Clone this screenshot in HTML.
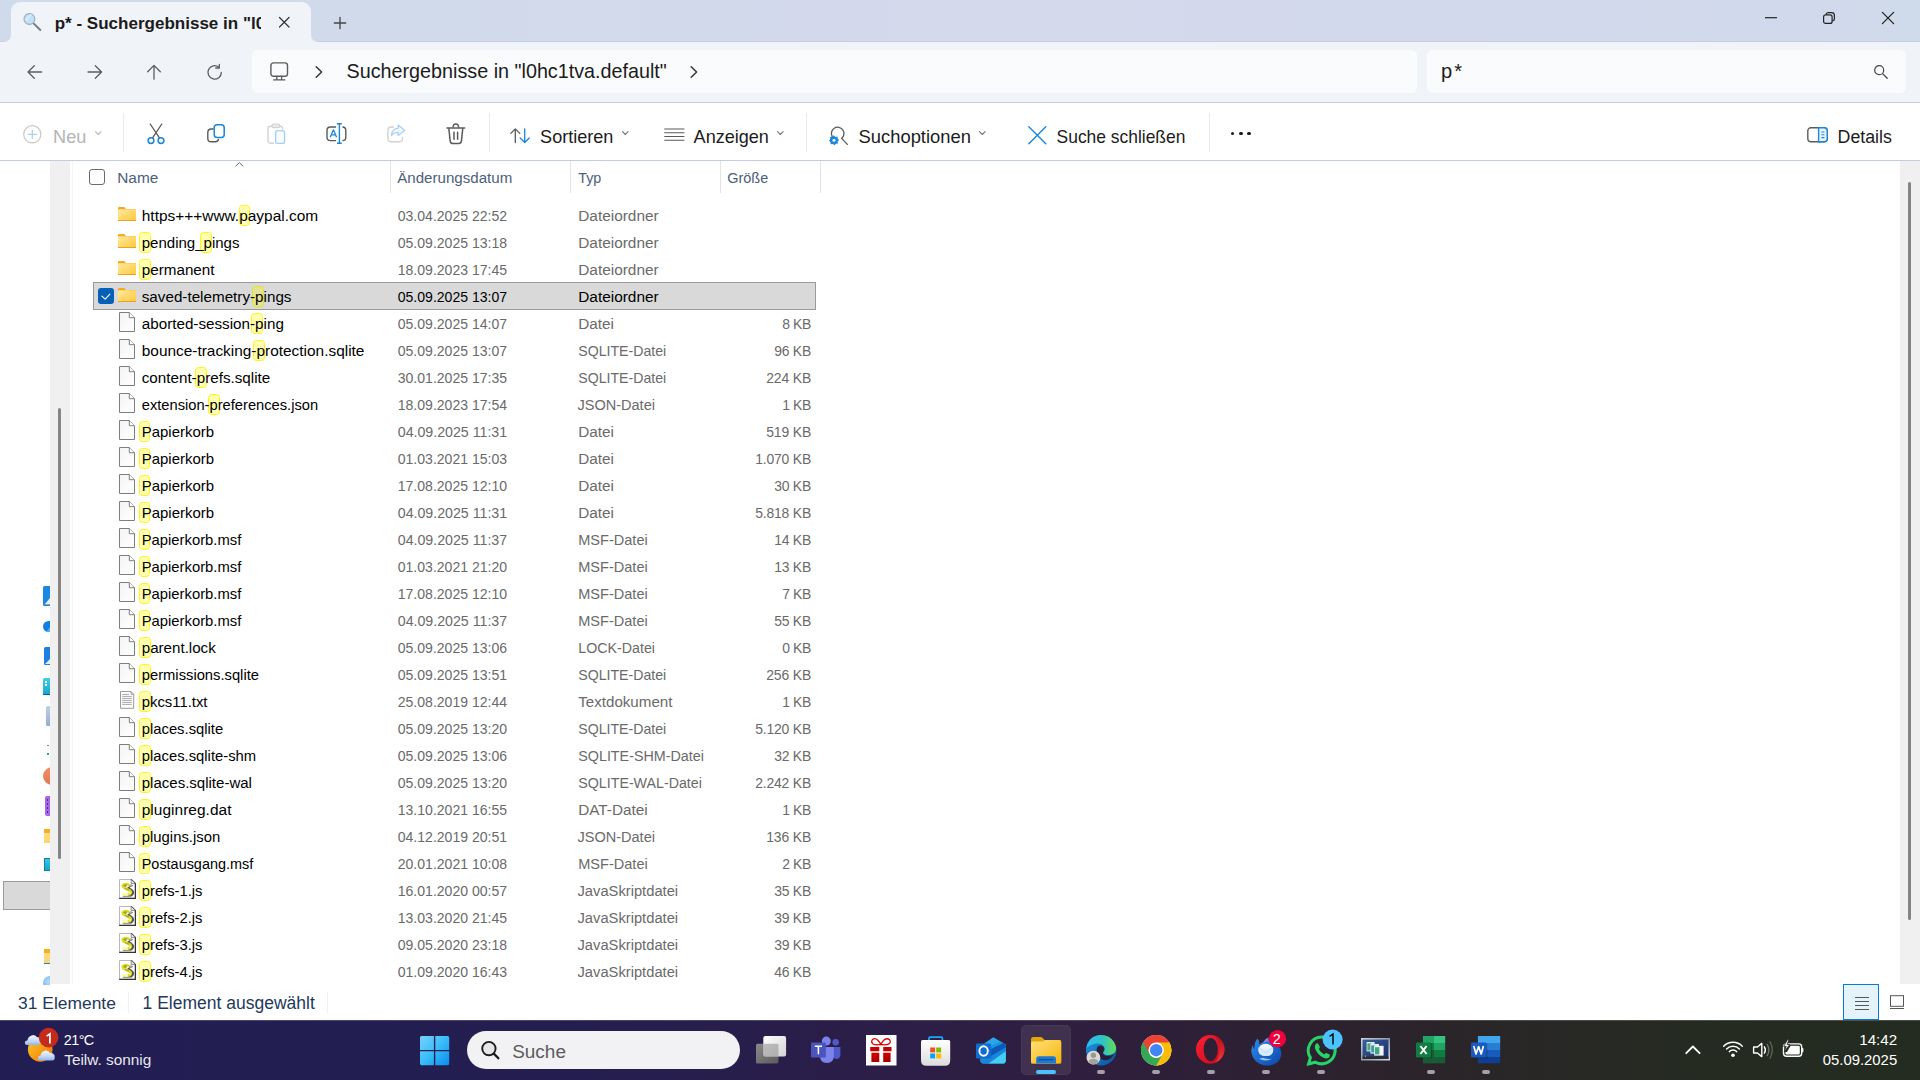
<!DOCTYPE html>
<html lang="de"><head><meta charset="utf-8"><title>p* - Suchergebnisse</title>
<style>
html,body{margin:0;padding:0;width:1920px;height:1080px;overflow:hidden;background:#fff;font-family:"Liberation Sans", sans-serif;}
.a{position:absolute}
.t{position:absolute;white-space:pre;line-height:normal}
svg{position:absolute;overflow:visible}

.hl{position:absolute;background:#ffffb0;border:1px solid #fff31a;border-radius:3.5px;box-sizing:border-box}
.sep{position:absolute;width:1px;background:#eaeaea}

</style></head><body>
<div class=a style="left:0;top:0;width:1920px;height:42px;background:linear-gradient(90deg,#cfdbeb 0%,#d1daeb 22%,#d4d9ec 50%,#d3d9ec 78%,#cfdaeb 100%)"></div><div class=a style="left:0;top:41px;width:1920px;height:1px;background:#c6cfe2"></div><div class=a style="left:11px;top:2px;width:300px;height:40px;background:#f0f3f8;border-radius:9px 9px 0 0"></div><div class=a style="left:0;top:42px;width:1920px;height:60px;background:#f0f3f8"></div><div class=a style="left:252px;top:50px;width:1165px;height:43px;background:#fafbfd;border-radius:6px"></div><div class=a style="left:1427px;top:50px;width:479px;height:43px;background:#fafbfd;border-radius:6px"></div><div class=a style="left:0;top:102px;width:1920px;height:1px;background:#c3cbdf"></div><div class=a style="left:0;top:103px;width:1920px;height:57px;background:#fff"></div><div class=a style="left:0;top:160px;width:1920px;height:1px;background:#c3cbdf"></div><div class=a style="left:50px;top:161px;width:20px;height:823px;background:#f0f0f0"></div><div class=a style="left:72px;top:161px;width:1px;height:823px;background:#f4f4f4"></div><div class=a style="left:58px;top:408px;width:3px;height:450.5px;background:#858585;border-radius:2px"></div><div class=a style="left:0;top:161px;width:50px;height:824px;overflow:hidden"><div class=a style="left:42.8px;top:425px;width:8px;height:19.6px;background:#1b87e3;border-radius:1.5px 0 0 1.5px"></div><svg style="left:44px;top:437px" width=6 height=8 viewBox="0 0 6 8"><path d="M6 0 V6.4 H.6Z" fill="#eaf3fd"/><path d="M1 7.2 H6" stroke="#3b78c8" stroke-width="1"/></svg><div class=a style="left:43px;top:460px;width:12px;height:11.4px;border-radius:50%;background:#0f7ee2"></div><svg style="left:46px;top:466px" width=4 height=6 viewBox="0 0 4 6"><path d="M4 0 V5 H0Z" fill="#58a9f0"/></svg><div class=a style="left:44px;top:486px;width:8px;height:17.7px;background:#1b80e2;border-radius:1.5px 0 0 1.5px"></div><svg style="left:45px;top:498px" width=5 height=6 viewBox="0 0 5 6"><path d="M5 0 V5 H0Z" fill="#e4effc"/></svg><div class=a style="left:43px;top:517px;width:8px;height:16px;background:linear-gradient(#3fd0e6,#1aa6d0);border-bottom:1.4px solid #0b5f9e;border-radius:1.5px 0 0 0"></div><div class=a style="left:45.4px;top:519.6px;width:2px;height:2px;background:#fff"></div><div class=a style="left:45.4px;top:523.2px;width:2px;height:2px;background:#e8fbff"></div><div class=a style="left:46.4px;top:545px;width:4px;height:19.8px;background:linear-gradient(#c3cfe6,#98acd2);border-radius:1.5px 0 0 1.5px"></div><div class=a style="left:47px;top:583.5px;width:2px;height:1.6px;background:#19b374"></div><div class=a style="left:46.6px;top:592.4px;width:2.4px;height:2px;background:#19b374"></div><div class=a style="left:43px;top:605.5px;width:19px;height:18.5px;border-radius:50%;background:linear-gradient(#f0906a,#e07850)"></div><div class=a style="left:44.8px;top:635px;width:6px;height:19.6px;background:#a765ea;border-radius:2px 0 0 2px"></div><div class=a style="left:46.6px;top:638px;width:1.6px;height:1.6px;background:#4a2a8a"></div><div class=a style="left:46.6px;top:642px;width:1.6px;height:1.6px;background:#4a2a8a"></div><div class=a style="left:46.6px;top:646px;width:1.6px;height:1.6px;background:#4a2a8a"></div><div class=a style="left:46.6px;top:650px;width:1.6px;height:1.6px;background:#4a2a8a"></div><div class=a style="left:44.2px;top:668px;width:6px;height:13.7px;background:linear-gradient(#f6b01e 0,#f6b01e 28%,#ffdc84 29%,#ffd46a 100%)"></div><div class=a style="left:44.2px;top:697px;width:6px;height:12.6px;box-sizing:border-box;background:linear-gradient(#35c8e4,#18a4cc);border:1px solid #0f7fae;border-right:0"></div><div class=a style="left:3px;top:720px;width:48px;height:29.4px;box-sizing:border-box;background:#d9d9d9;border:1px solid #9a9a9a"></div><div class=a style="left:44.2px;top:788px;width:6px;height:15.4px;background:linear-gradient(#f6b01e 0,#f6b01e 24%,#ffdc84 25%,#ffd46a 90%,#1a86dd 91%)"></div><div class=a style="left:43px;top:815px;width:14px;height:14px;border-radius:50%;background:radial-gradient(circle at 40% 40%,#b8ddfa,#4a9fe8)"></div></div><div class=a style="left:1900px;top:161px;width:20px;height:823px;background:#f0f0f0"></div><div class=a style="left:1908px;top:182px;width:3px;height:738px;background:#858585;border-radius:2px"></div><div class=sep style="left:123px;top:113px;height:39px"></div><div class=sep style="left:489px;top:113px;height:39px"></div><div class=sep style="left:806px;top:113px;height:39px"></div><div class=sep style="left:1209px;top:113px;height:39px"></div><div class=sep style="left:390px;top:161px;height:32px;background:#e3e3e3"></div><div class=sep style="left:570px;top:161px;height:32px;background:#e3e3e3"></div><div class=sep style="left:720px;top:161px;height:32px;background:#e3e3e3"></div><div class=sep style="left:820px;top:161px;height:32px;background:#e3e3e3"></div><div class=a style="left:89px;top:169px;width:16px;height:16px;box-sizing:border-box;border:1px solid #6b6b6b;border-radius:3px;background:#fff"></div><div class=a style="left:93px;top:282px;width:723px;height:28px;box-sizing:border-box;background:#d9d9d9;border:1px solid #9a9a9a"></div><div class=a style="left:98px;top:288px;width:16px;height:16px;border-radius:3px;background:#0560b6"></div><svg style="left:98px;top:288px" width=16 height=16 viewBox="0 0 16 16"><path d="M3.9 8.2 L7.2 11.2 L11.9 6.1" fill="none" stroke="#fff" stroke-width="1.1" stroke-linecap="round" stroke-linejoin="round"/></svg><svg style="left:0;top:0" width="0" height="0"><defs><linearGradient id="gfb" x1="0" y1="0" x2="1" y2="1"><stop offset="0" stop-color="#ffe9a2"/><stop offset="1" stop-color="#ffc83a"/></linearGradient><linearGradient id="gpg" x1="0" y1="0" x2="1" y2="1"><stop offset="0" stop-color="#f4f4f4"/><stop offset="1" stop-color="#ffffff"/></linearGradient></defs></svg><div class=hl style="left:238.5px;top:205.0px;width:11.5px;height:21px;background:#ffffb0;border-color:#fff31a"></div><svg style="left:118px;top:207.0px" width=18 height=14 viewBox="0 0 18 14"><path d="M0 1 Q0 0 1 0 H5.6 Q6.3 0 6.8 .6 L8 2 H17 Q18 2 18 3 V14 H0Z" fill="#f2aa1e"/><path d="M0 3.2 Q0 2.2 1 2.2 H17 Q18 2.2 18 3.2 V12.9 Q18 13.4 17.5 13.4 H.5 Q0 13.4 0 12.9Z" fill="url(#gfb)"/><path d="M0 13 H18 V13.4 Q18 14 17.4 14 H.6 Q0 14 0 13.4Z" fill="#e8a326"/></svg><div class=hl style="left:139.0px;top:232.0px;width:11.75px;height:21px;background:#ffffb0;border-color:#fff31a"></div><div class=hl style="left:200.25px;top:232.0px;width:11.75px;height:21px;background:#ffffb0;border-color:#fff31a"></div><svg style="left:118px;top:234.0px" width=18 height=14 viewBox="0 0 18 14"><path d="M0 1 Q0 0 1 0 H5.6 Q6.3 0 6.8 .6 L8 2 H17 Q18 2 18 3 V14 H0Z" fill="#f2aa1e"/><path d="M0 3.2 Q0 2.2 1 2.2 H17 Q18 2.2 18 3.2 V12.9 Q18 13.4 17.5 13.4 H.5 Q0 13.4 0 12.9Z" fill="url(#gfb)"/><path d="M0 13 H18 V13.4 Q18 14 17.4 14 H.6 Q0 14 0 13.4Z" fill="#e8a326"/></svg><div class=hl style="left:139.0px;top:259.0px;width:11.75px;height:21px;background:#ffffb0;border-color:#fff31a"></div><svg style="left:118px;top:261.0px" width=18 height=14 viewBox="0 0 18 14"><path d="M0 1 Q0 0 1 0 H5.6 Q6.3 0 6.8 .6 L8 2 H17 Q18 2 18 3 V14 H0Z" fill="#f2aa1e"/><path d="M0 3.2 Q0 2.2 1 2.2 H17 Q18 2.2 18 3.2 V12.9 Q18 13.4 17.5 13.4 H.5 Q0 13.4 0 12.9Z" fill="url(#gfb)"/><path d="M0 13 H18 V13.4 Q18 14 17.4 14 H.6 Q0 14 0 13.4Z" fill="#e8a326"/></svg><div class=hl style="left:251.75px;top:286.0px;width:12.25px;height:21px;background:#e2e298;border-color:#e6e224"></div><svg style="left:118px;top:288.0px" width=18 height=14 viewBox="0 0 18 14"><path d="M0 1 Q0 0 1 0 H5.6 Q6.3 0 6.8 .6 L8 2 H17 Q18 2 18 3 V14 H0Z" fill="#f2aa1e"/><path d="M0 3.2 Q0 2.2 1 2.2 H17 Q18 2.2 18 3.2 V12.9 Q18 13.4 17.5 13.4 H.5 Q0 13.4 0 12.9Z" fill="url(#gfb)"/><path d="M0 13 H18 V13.4 Q18 14 17.4 14 H.6 Q0 14 0 13.4Z" fill="#e8a326"/></svg><div class=hl style="left:250.5px;top:313.0px;width:12.0px;height:21px;background:#ffffb0;border-color:#fff31a"></div><svg style="left:119px;top:312.0px" width=16 height=20 viewBox="0 0 16 20"><path d="M.5 .5 H10.3 L15.5 5.7 V19.5 H.5Z" fill="url(#gpg)" stroke="#7e7e7e"/><path d="M10.3 .5 V5.7 H15.5" fill="#fff" stroke="#7e7e7e"/></svg><div class=hl style="left:253.0px;top:340.0px;width:12.0px;height:21px;background:#ffffb0;border-color:#fff31a"></div><svg style="left:119px;top:339.0px" width=16 height=20 viewBox="0 0 16 20"><path d="M.5 .5 H10.3 L15.5 5.7 V19.5 H.5Z" fill="url(#gpg)" stroke="#7e7e7e"/><path d="M10.3 .5 V5.7 H15.5" fill="#fff" stroke="#7e7e7e"/></svg><div class=hl style="left:194.75px;top:367.0px;width:12.25px;height:21px;background:#ffffb0;border-color:#fff31a"></div><svg style="left:119px;top:366.0px" width=16 height=20 viewBox="0 0 16 20"><path d="M.5 .5 H10.3 L15.5 5.7 V19.5 H.5Z" fill="url(#gpg)" stroke="#7e7e7e"/><path d="M10.3 .5 V5.7 H15.5" fill="#fff" stroke="#7e7e7e"/></svg><div class=hl style="left:207.75px;top:394.0px;width:11.75px;height:21px;background:#ffffb0;border-color:#fff31a"></div><svg style="left:119px;top:393.0px" width=16 height=20 viewBox="0 0 16 20"><path d="M.5 .5 H10.3 L15.5 5.7 V19.5 H.5Z" fill="url(#gpg)" stroke="#7e7e7e"/><path d="M10.3 .5 V5.7 H15.5" fill="#fff" stroke="#7e7e7e"/></svg><div class=hl style="left:139.0px;top:421.0px;width:10.5px;height:21px;background:#ffffb0;border-color:#fff31a"></div><svg style="left:119px;top:420.0px" width=16 height=20 viewBox="0 0 16 20"><path d="M.5 .5 H10.3 L15.5 5.7 V19.5 H.5Z" fill="url(#gpg)" stroke="#7e7e7e"/><path d="M10.3 .5 V5.7 H15.5" fill="#fff" stroke="#7e7e7e"/></svg><div class=hl style="left:139.0px;top:448.0px;width:10.5px;height:21px;background:#ffffb0;border-color:#fff31a"></div><svg style="left:119px;top:447.0px" width=16 height=20 viewBox="0 0 16 20"><path d="M.5 .5 H10.3 L15.5 5.7 V19.5 H.5Z" fill="url(#gpg)" stroke="#7e7e7e"/><path d="M10.3 .5 V5.7 H15.5" fill="#fff" stroke="#7e7e7e"/></svg><div class=hl style="left:139.0px;top:475.0px;width:10.5px;height:21px;background:#ffffb0;border-color:#fff31a"></div><svg style="left:119px;top:474.0px" width=16 height=20 viewBox="0 0 16 20"><path d="M.5 .5 H10.3 L15.5 5.7 V19.5 H.5Z" fill="url(#gpg)" stroke="#7e7e7e"/><path d="M10.3 .5 V5.7 H15.5" fill="#fff" stroke="#7e7e7e"/></svg><div class=hl style="left:139.0px;top:502.0px;width:10.5px;height:21px;background:#ffffb0;border-color:#fff31a"></div><svg style="left:119px;top:501.0px" width=16 height=20 viewBox="0 0 16 20"><path d="M.5 .5 H10.3 L15.5 5.7 V19.5 H.5Z" fill="url(#gpg)" stroke="#7e7e7e"/><path d="M10.3 .5 V5.7 H15.5" fill="#fff" stroke="#7e7e7e"/></svg><div class=hl style="left:139.0px;top:529.0px;width:10.5px;height:21px;background:#ffffb0;border-color:#fff31a"></div><svg style="left:119px;top:528.0px" width=16 height=20 viewBox="0 0 16 20"><path d="M.5 .5 H10.3 L15.5 5.7 V19.5 H.5Z" fill="url(#gpg)" stroke="#7e7e7e"/><path d="M10.3 .5 V5.7 H15.5" fill="#fff" stroke="#7e7e7e"/></svg><div class=hl style="left:139.0px;top:556.0px;width:10.5px;height:21px;background:#ffffb0;border-color:#fff31a"></div><svg style="left:119px;top:555.0px" width=16 height=20 viewBox="0 0 16 20"><path d="M.5 .5 H10.3 L15.5 5.7 V19.5 H.5Z" fill="url(#gpg)" stroke="#7e7e7e"/><path d="M10.3 .5 V5.7 H15.5" fill="#fff" stroke="#7e7e7e"/></svg><div class=hl style="left:139.0px;top:583.0px;width:10.5px;height:21px;background:#ffffb0;border-color:#fff31a"></div><svg style="left:119px;top:582.0px" width=16 height=20 viewBox="0 0 16 20"><path d="M.5 .5 H10.3 L15.5 5.7 V19.5 H.5Z" fill="url(#gpg)" stroke="#7e7e7e"/><path d="M10.3 .5 V5.7 H15.5" fill="#fff" stroke="#7e7e7e"/></svg><div class=hl style="left:139.0px;top:610.0px;width:10.5px;height:21px;background:#ffffb0;border-color:#fff31a"></div><svg style="left:119px;top:609.0px" width=16 height=20 viewBox="0 0 16 20"><path d="M.5 .5 H10.3 L15.5 5.7 V19.5 H.5Z" fill="url(#gpg)" stroke="#7e7e7e"/><path d="M10.3 .5 V5.7 H15.5" fill="#fff" stroke="#7e7e7e"/></svg><div class=hl style="left:139.0px;top:637.0px;width:11.75px;height:21px;background:#ffffb0;border-color:#fff31a"></div><svg style="left:119px;top:636.0px" width=16 height=20 viewBox="0 0 16 20"><path d="M.5 .5 H10.3 L15.5 5.7 V19.5 H.5Z" fill="url(#gpg)" stroke="#7e7e7e"/><path d="M10.3 .5 V5.7 H15.5" fill="#fff" stroke="#7e7e7e"/></svg><div class=hl style="left:139.0px;top:664.0px;width:11.75px;height:21px;background:#ffffb0;border-color:#fff31a"></div><svg style="left:119px;top:663.0px" width=16 height=20 viewBox="0 0 16 20"><path d="M.5 .5 H10.3 L15.5 5.7 V19.5 H.5Z" fill="url(#gpg)" stroke="#7e7e7e"/><path d="M10.3 .5 V5.7 H15.5" fill="#fff" stroke="#7e7e7e"/></svg><div class=hl style="left:139.0px;top:691.0px;width:11.75px;height:21px;background:#ffffb0;border-color:#fff31a"></div><svg style="left:120px;top:691.2px" width=15 height=18 viewBox="0 0 15 18"><path d="M.5 .5 H11 L13.7 3.2 V17.3 H.5Z" fill="#fdfdfd" stroke="#9c9c9c"/><path d="M11 .5 V3.2 H13.7" fill="none" stroke="#9c9c9c"/><path d="M2.2 3.4 H9" stroke="#a9a9a9" stroke-width="1"/><path d="M2.2 5.4 H11.8" stroke="#a9a9a9" stroke-width="1"/><path d="M2.2 7.4 H11.8" stroke="#a9a9a9" stroke-width="1"/><path d="M2.2 9.4 H11.8" stroke="#a9a9a9" stroke-width="1"/><path d="M2.2 11.4 H11.8" stroke="#a9a9a9" stroke-width="1"/><path d="M2.2 13.4 H11.8" stroke="#a9a9a9" stroke-width="1"/></svg><div class=hl style="left:139.0px;top:718.0px;width:11.75px;height:21px;background:#ffffb0;border-color:#fff31a"></div><svg style="left:119px;top:717.0px" width=16 height=20 viewBox="0 0 16 20"><path d="M.5 .5 H10.3 L15.5 5.7 V19.5 H.5Z" fill="url(#gpg)" stroke="#7e7e7e"/><path d="M10.3 .5 V5.7 H15.5" fill="#fff" stroke="#7e7e7e"/></svg><div class=hl style="left:139.0px;top:745.0px;width:11.75px;height:21px;background:#ffffb0;border-color:#fff31a"></div><svg style="left:119px;top:744.0px" width=16 height=20 viewBox="0 0 16 20"><path d="M.5 .5 H10.3 L15.5 5.7 V19.5 H.5Z" fill="url(#gpg)" stroke="#7e7e7e"/><path d="M10.3 .5 V5.7 H15.5" fill="#fff" stroke="#7e7e7e"/></svg><div class=hl style="left:139.0px;top:772.0px;width:11.75px;height:21px;background:#ffffb0;border-color:#fff31a"></div><svg style="left:119px;top:771.0px" width=16 height=20 viewBox="0 0 16 20"><path d="M.5 .5 H10.3 L15.5 5.7 V19.5 H.5Z" fill="url(#gpg)" stroke="#7e7e7e"/><path d="M10.3 .5 V5.7 H15.5" fill="#fff" stroke="#7e7e7e"/></svg><div class=hl style="left:139.0px;top:799.0px;width:11.75px;height:21px;background:#ffffb0;border-color:#fff31a"></div><svg style="left:119px;top:798.0px" width=16 height=20 viewBox="0 0 16 20"><path d="M.5 .5 H10.3 L15.5 5.7 V19.5 H.5Z" fill="url(#gpg)" stroke="#7e7e7e"/><path d="M10.3 .5 V5.7 H15.5" fill="#fff" stroke="#7e7e7e"/></svg><div class=hl style="left:139.0px;top:826.0px;width:11.75px;height:21px;background:#ffffb0;border-color:#fff31a"></div><svg style="left:119px;top:825.0px" width=16 height=20 viewBox="0 0 16 20"><path d="M.5 .5 H10.3 L15.5 5.7 V19.5 H.5Z" fill="url(#gpg)" stroke="#7e7e7e"/><path d="M10.3 .5 V5.7 H15.5" fill="#fff" stroke="#7e7e7e"/></svg><div class=hl style="left:139.0px;top:853.0px;width:10.5px;height:21px;background:#ffffb0;border-color:#fff31a"></div><svg style="left:119px;top:852.0px" width=16 height=20 viewBox="0 0 16 20"><path d="M.5 .5 H10.3 L15.5 5.7 V19.5 H.5Z" fill="url(#gpg)" stroke="#7e7e7e"/><path d="M10.3 .5 V5.7 H15.5" fill="#fff" stroke="#7e7e7e"/></svg><div class=hl style="left:139.0px;top:880.0px;width:11.75px;height:21px;background:#ffffb0;border-color:#fff31a"></div><svg style="left:119px;top:879.0px" width=17 height=20 viewBox="0 0 17 20"><path d="M.5 .5 H12.2 L16.4 4.6 V19.4 H.5Z" fill="#fff" stroke="#b9b9b9"/><path d="M12.2 .4 L16.4 4.6 V19.3 H.2" fill="none" stroke="#333" stroke-width="1.25"/><path d="M12.2 .6 V4.6 H16.2" fill="#e4e4e4" stroke="#777" stroke-width=".8"/><g transform="translate(.2 .9)"><path d="M9.4 8.2 L13 11.2 Q14.4 13 12.6 14.6 L10.6 15.6" fill="none" stroke="#555" stroke-width="2.6" stroke-linecap="round" stroke-linejoin="round"/><path d="M9.4 5.6 Q11.6 3.8 13.8 5.6 Q12.8 7.4 9.8 6.8Z" fill="#666"/><path d="M10.4 5.4 H12.6" stroke="#ddd" stroke-width=".8"/><path d="M4.2 16.6 H11.8" stroke="#9a9a9a" stroke-width="1.3" stroke-linecap="round"/><path d="M9.4 4.8 Q6.2 3.2 3.8 5 Q2.8 6.8 5 8 L10.6 10.6 Q12.4 12.2 11.2 13.6 Q10.6 14.4 9.6 14.2" fill="none" stroke="#dcdc28" stroke-width="2.5" stroke-linecap="round" stroke-linejoin="round"/><path d="M4 5.6 Q5.6 4 8 4.6 L7 7.2 Q5 7.4 4 5.6Z" fill="#a4a41c"/><path d="M5.6 8.4 L10 10.4" stroke="#a8a820" stroke-width="1.2"/><path d="M10.4 12.4 Q11.6 12.8 10.8 13.8" fill="none" stroke="#ffff90" stroke-width="1.2" stroke-linecap="round"/><rect x="3.4" y="13.4" width="5.2" height="2.5" rx=".6" fill="#f4f45a"/><path d="M4 14.2 H8" stroke="#fff" stroke-width=".9"/></g></svg><div class=hl style="left:139.0px;top:907.0px;width:11.75px;height:21px;background:#ffffb0;border-color:#fff31a"></div><svg style="left:119px;top:906.0px" width=17 height=20 viewBox="0 0 17 20"><path d="M.5 .5 H12.2 L16.4 4.6 V19.4 H.5Z" fill="#fff" stroke="#b9b9b9"/><path d="M12.2 .4 L16.4 4.6 V19.3 H.2" fill="none" stroke="#333" stroke-width="1.25"/><path d="M12.2 .6 V4.6 H16.2" fill="#e4e4e4" stroke="#777" stroke-width=".8"/><g transform="translate(.2 .9)"><path d="M9.4 8.2 L13 11.2 Q14.4 13 12.6 14.6 L10.6 15.6" fill="none" stroke="#555" stroke-width="2.6" stroke-linecap="round" stroke-linejoin="round"/><path d="M9.4 5.6 Q11.6 3.8 13.8 5.6 Q12.8 7.4 9.8 6.8Z" fill="#666"/><path d="M10.4 5.4 H12.6" stroke="#ddd" stroke-width=".8"/><path d="M4.2 16.6 H11.8" stroke="#9a9a9a" stroke-width="1.3" stroke-linecap="round"/><path d="M9.4 4.8 Q6.2 3.2 3.8 5 Q2.8 6.8 5 8 L10.6 10.6 Q12.4 12.2 11.2 13.6 Q10.6 14.4 9.6 14.2" fill="none" stroke="#dcdc28" stroke-width="2.5" stroke-linecap="round" stroke-linejoin="round"/><path d="M4 5.6 Q5.6 4 8 4.6 L7 7.2 Q5 7.4 4 5.6Z" fill="#a4a41c"/><path d="M5.6 8.4 L10 10.4" stroke="#a8a820" stroke-width="1.2"/><path d="M10.4 12.4 Q11.6 12.8 10.8 13.8" fill="none" stroke="#ffff90" stroke-width="1.2" stroke-linecap="round"/><rect x="3.4" y="13.4" width="5.2" height="2.5" rx=".6" fill="#f4f45a"/><path d="M4 14.2 H8" stroke="#fff" stroke-width=".9"/></g></svg><div class=hl style="left:139.0px;top:934.0px;width:11.75px;height:21px;background:#ffffb0;border-color:#fff31a"></div><svg style="left:119px;top:933.0px" width=17 height=20 viewBox="0 0 17 20"><path d="M.5 .5 H12.2 L16.4 4.6 V19.4 H.5Z" fill="#fff" stroke="#b9b9b9"/><path d="M12.2 .4 L16.4 4.6 V19.3 H.2" fill="none" stroke="#333" stroke-width="1.25"/><path d="M12.2 .6 V4.6 H16.2" fill="#e4e4e4" stroke="#777" stroke-width=".8"/><g transform="translate(.2 .9)"><path d="M9.4 8.2 L13 11.2 Q14.4 13 12.6 14.6 L10.6 15.6" fill="none" stroke="#555" stroke-width="2.6" stroke-linecap="round" stroke-linejoin="round"/><path d="M9.4 5.6 Q11.6 3.8 13.8 5.6 Q12.8 7.4 9.8 6.8Z" fill="#666"/><path d="M10.4 5.4 H12.6" stroke="#ddd" stroke-width=".8"/><path d="M4.2 16.6 H11.8" stroke="#9a9a9a" stroke-width="1.3" stroke-linecap="round"/><path d="M9.4 4.8 Q6.2 3.2 3.8 5 Q2.8 6.8 5 8 L10.6 10.6 Q12.4 12.2 11.2 13.6 Q10.6 14.4 9.6 14.2" fill="none" stroke="#dcdc28" stroke-width="2.5" stroke-linecap="round" stroke-linejoin="round"/><path d="M4 5.6 Q5.6 4 8 4.6 L7 7.2 Q5 7.4 4 5.6Z" fill="#a4a41c"/><path d="M5.6 8.4 L10 10.4" stroke="#a8a820" stroke-width="1.2"/><path d="M10.4 12.4 Q11.6 12.8 10.8 13.8" fill="none" stroke="#ffff90" stroke-width="1.2" stroke-linecap="round"/><rect x="3.4" y="13.4" width="5.2" height="2.5" rx=".6" fill="#f4f45a"/><path d="M4 14.2 H8" stroke="#fff" stroke-width=".9"/></g></svg><div class=hl style="left:139.0px;top:961.0px;width:11.75px;height:21px;background:#ffffb0;border-color:#fff31a"></div><svg style="left:119px;top:960.0px" width=17 height=20 viewBox="0 0 17 20"><path d="M.5 .5 H12.2 L16.4 4.6 V19.4 H.5Z" fill="#fff" stroke="#b9b9b9"/><path d="M12.2 .4 L16.4 4.6 V19.3 H.2" fill="none" stroke="#333" stroke-width="1.25"/><path d="M12.2 .6 V4.6 H16.2" fill="#e4e4e4" stroke="#777" stroke-width=".8"/><g transform="translate(.2 .9)"><path d="M9.4 8.2 L13 11.2 Q14.4 13 12.6 14.6 L10.6 15.6" fill="none" stroke="#555" stroke-width="2.6" stroke-linecap="round" stroke-linejoin="round"/><path d="M9.4 5.6 Q11.6 3.8 13.8 5.6 Q12.8 7.4 9.8 6.8Z" fill="#666"/><path d="M10.4 5.4 H12.6" stroke="#ddd" stroke-width=".8"/><path d="M4.2 16.6 H11.8" stroke="#9a9a9a" stroke-width="1.3" stroke-linecap="round"/><path d="M9.4 4.8 Q6.2 3.2 3.8 5 Q2.8 6.8 5 8 L10.6 10.6 Q12.4 12.2 11.2 13.6 Q10.6 14.4 9.6 14.2" fill="none" stroke="#dcdc28" stroke-width="2.5" stroke-linecap="round" stroke-linejoin="round"/><path d="M4 5.6 Q5.6 4 8 4.6 L7 7.2 Q5 7.4 4 5.6Z" fill="#a4a41c"/><path d="M5.6 8.4 L10 10.4" stroke="#a8a820" stroke-width="1.2"/><path d="M10.4 12.4 Q11.6 12.8 10.8 13.8" fill="none" stroke="#ffff90" stroke-width="1.2" stroke-linecap="round"/><rect x="3.4" y="13.4" width="5.2" height="2.5" rx=".6" fill="#f4f45a"/><path d="M4 14.2 H8" stroke="#fff" stroke-width=".9"/></g></svg><div class=sep style="left:128px;top:992px;height:21px;background:#f0f0f0"></div><div class=sep style="left:327px;top:992px;height:21px;background:#f0f0f0"></div><div class=a style="left:0;top:1020px;width:1920px;height:60px;background:linear-gradient(90deg,#221e54 0%,#241e50 30%,#2b1e48 45%,#2f1e3e 56%,#2d2130 68%,#292627 78%,#252b21 89%,#242b20 100%)"></div><div class=a style="left:0;top:1020px;width:1920px;height:1px;background:rgba(255,255,255,.18)"></div><svg style="left:3px;top:34px" width="8" height="8" viewBox="0 0 8 8"><path d="M8 0 V8 H0 Q8 8 8 0Z" fill="#f0f3f8"/></svg><svg style="left:311px;top:34px" width="8" height="8" viewBox="0 0 8 8"><path d="M0 0 V8 H8 Q0 8 0 0Z" fill="#f0f3f8"/></svg><svg style="left:22px;top:12px" width="20" height="20" viewBox="0 0 20 20"><line x1="11.8" y1="11.6" x2="18.3" y2="18" stroke="#6f7c89" stroke-width="2" stroke-linecap="round"/>
<circle cx="7.4" cy="7" r="5.4" fill="#bfe1fa" stroke="#a2aab4" stroke-width="1.1"/>
<path d="M4.2 7.8 L8.6 3.2" stroke="#d6ecfd" stroke-width="2.2" stroke-linecap="round"/></svg><svg style="left:279px;top:17px" width="11" height="11" viewBox="0 0 11 11"><path d="M.5 .5 L10 10 M10 .5 L.5 10" stroke="#333" stroke-width="1.2" fill="none" stroke-linecap="round"/></svg><svg style="left:334px;top:17px" width="12" height="12" viewBox="0 0 12 12"><path d="M6 .3 V11.7 M.3 6 H11.7" stroke="#444" stroke-width="1.3" fill="none" stroke-linecap="round"/></svg><svg style="left:1765px;top:17px" width="12" height="2" viewBox="0 0 12 2"><path d="M0 .7 H12" stroke="#222" stroke-width="1.2"/></svg><svg style="left:1823px;top:12px" width="12" height="12" viewBox="0 0 12 12"><rect x=".6" y="2.9" width="8.5" height="8.5" rx="2" fill="none" stroke="#222" stroke-width="1.2"/><path d="M3 2.6 Q3.3 .6 5.2 .6 H8.6 Q11.4 .6 11.4 3.4 V6.8 Q11.4 8.7 9.4 9" fill="none" stroke="#222" stroke-width="1.2"/></svg><svg style="left:1882px;top:12px" width="12" height="12" viewBox="0 0 12 12"><path d="M.4 .4 L11.6 11.6 M11.6 .4 L.4 11.6" stroke="#222" stroke-width="1.3" fill="none" stroke-linecap="round"/></svg><svg style="left:27px;top:64px" width="16" height="16" viewBox="0 0 16 16"><path d="M14.6 8 H1.2 M7.3 1.7 L1 8 L7.3 14.3" fill="none" stroke="#5c5c5c" stroke-width="1.3" stroke-linecap="round" stroke-linejoin="round"/></svg><svg style="left:87px;top:64px" width="16" height="16" viewBox="0 0 16 16"><path d="M1 8 H14.4 M8.3 1.7 L14.6 8 L8.3 14.3" fill="none" stroke="#5c5c5c" stroke-width="1.3" stroke-linecap="round" stroke-linejoin="round"/></svg><svg style="left:146px;top:64px" width="16" height="16" viewBox="0 0 16 16"><path d="M8 15.2 V1.6 M1.7 7.7 L8 1.4 L14.3 7.7" fill="none" stroke="#5c5c5c" stroke-width="1.3" stroke-linecap="round" stroke-linejoin="round"/></svg><svg style="left:207px;top:64px" width="16" height="16" viewBox="0 0 16 16"><path d="M14.3 8.4 A6.7 6.7 0 1 1 11.8 3.2" fill="none" stroke="#5c5c5c" stroke-width="1.3" stroke-linecap="round"/><path d="M12.3 .4 V4 H8.7" fill="none" stroke="#5c5c5c" stroke-width="1.3" stroke-linecap="round" stroke-linejoin="round"/></svg><svg style="left:270px;top:62px" width="19" height="19" viewBox="0 0 19 19"><rect x=".9" y=".9" width="16.6" height="13.4" rx="2.6" fill="none" stroke="#5c5c5c" stroke-width="1.4"/><path d="M6.8 14.5 V17.6 M11.6 14.5 V17.6 M3.6 17.9 H14.8" fill="none" stroke="#5c5c5c" stroke-width="1.3" stroke-linecap="round"/></svg><svg style="left:315px;top:66px" width="8" height="12" viewBox="0 0 8 12"><path d="M1.2 .8 L6.6 6 L1.2 11.2" fill="none" stroke="#333" stroke-width="1.5" stroke-linecap="round" stroke-linejoin="round"/></svg><svg style="left:690px;top:66px" width="8" height="12" viewBox="0 0 8 12"><path d="M1.2 .8 L6.6 6 L1.2 11.2" fill="none" stroke="#333" stroke-width="1.5" stroke-linecap="round" stroke-linejoin="round"/></svg><svg style="left:1874px;top:65px" width="14" height="14" viewBox="0 0 14 14"><circle cx="5.2" cy="5.2" r="4.5" fill="none" stroke="#444" stroke-width="1.2"/><path d="M8.6 8.6 L13.2 13.2" stroke="#444" stroke-width="1.3" stroke-linecap="round"/></svg><svg style="left:23px;top:125px" width="19" height="19" viewBox="0 0 19 19"><circle cx="9.3" cy="9.3" r="8.6" fill="none" stroke="#c9c9c9" stroke-width="1.2"/><path d="M9.3 5.2 V13.4 M5.2 9.3 H13.4" stroke="#a9d0f3" stroke-width="1.3" stroke-linecap="round"/></svg><svg style="left:95px;top:131px" width="7" height="5" viewBox="0 0 7 5"><path d="M.5 .6 L3.3 3.5 L6.1 .6" fill="none" stroke="#b8b8b8" stroke-width="1.1" stroke-linecap="round" stroke-linejoin="round"/></svg><svg style="left:622px;top:131px" width="7" height="5" viewBox="0 0 7 5"><path d="M.5 .6 L3.3 3.5 L6.1 .6" fill="none" stroke="#777" stroke-width="1.1" stroke-linecap="round" stroke-linejoin="round"/></svg><svg style="left:777px;top:131px" width="7" height="5" viewBox="0 0 7 5"><path d="M.5 .6 L3.3 3.5 L6.1 .6" fill="none" stroke="#777" stroke-width="1.1" stroke-linecap="round" stroke-linejoin="round"/></svg><svg style="left:979px;top:131px" width="7" height="5" viewBox="0 0 7 5"><path d="M.5 .6 L3.3 3.5 L6.1 .6" fill="none" stroke="#777" stroke-width="1.1" stroke-linecap="round" stroke-linejoin="round"/></svg><svg style="left:147px;top:122.7px" width="18" height="22" viewBox="0 0 18 22"><path d="M3.2 1 L12.6 15.2 M14.8 1 L5.4 15.2" stroke="#5a5a5a" stroke-width="1.3" stroke-linecap="round" fill="none"/><circle cx="4" cy="17.6" r="2.9" fill="none" stroke="#1a86d9" stroke-width="1.5"/><circle cx="14" cy="17.6" r="2.9" fill="none" stroke="#1a86d9" stroke-width="1.5"/></svg><svg style="left:207px;top:123.6px" width="18" height="19" viewBox="0 0 18 19"><path d="M6.2 5 H4.2 Q.8 5 .8 8.4 V14.4 Q.8 17.8 4.2 17.8 H8.4 Q11 17.8 11.4 15.4" fill="none" stroke="#5a5a5a" stroke-width="1.4" stroke-linecap="round"/><rect x="7.2" y=".8" width="10" height="12.6" rx="3" fill="none" stroke="#1a86d9" stroke-width="1.5"/></svg><svg style="left:267px;top:122.7px" width="19" height="22" viewBox="0 0 19 22"><path d="M5.4 3.2 H3.6 Q1 3.2 1 5.8 V17.6 Q1 20.2 3.6 20.2 H7" fill="none" stroke="#d2d2d2" stroke-width="1.4"/><path d="M12.6 3.2 H13.4 Q15.6 3.2 15.6 5.6 V6.5" fill="none" stroke="#d2d2d2" stroke-width="1.4"/><rect x="5" y="1" width="7.6" height="3.6" rx="1.6" fill="#ececec" stroke="#d2d2d2" stroke-width="1.2"/><rect x="8.6" y="7.6" width="9" height="12.8" rx="2.2" fill="#f6fbff" stroke="#a9d0f3" stroke-width="1.4"/></svg><svg style="left:326px;top:122.6px" width="21" height="21" viewBox="0 0 21 21"><path d="M10 4 H4.4 Q1 4 1 7.4 V14.2 Q1 17.6 4.4 17.6 H10" fill="none" stroke="#5a5a5a" stroke-width="1.4"/><path d="M16.4 4 Q19.8 4 19.8 7.4 V14.2 Q19.8 17.6 16.4 17.6" fill="none" stroke="#5a5a5a" stroke-width="1.4"/><path d="M13.4 .8 V20.2 M11 .8 H15.8 M11 20.2 H15.8" stroke="#1a86d9" stroke-width="1.4" fill="none"/><path d="M4.2 14.2 L7.4 6.8 L10.6 14.2 M5.3 11.8 H9.5" fill="none" stroke="#1a86d9" stroke-width="1.3" stroke-linejoin="round"/></svg><svg style="left:387px;top:123.6px" width="19" height="19" viewBox="0 0 19 19"><path d="M6.6 3 H4.2 Q.9 3 .9 6.3 V14.4 Q.9 17.7 4.2 17.7 H12.2 Q15.5 17.7 15.5 14.4 V13.6" fill="none" stroke="#d2d2d2" stroke-width="1.4" stroke-linecap="round"/><path d="M11.2 .9 L17.8 6.4 L11.2 11.6 V8.4 Q6.4 8.2 4.4 11.6 Q4.8 5 11.2 4.2Z" fill="#f6fbff" stroke="#a9d0f3" stroke-width="1.3" stroke-linejoin="round"/></svg><svg style="left:446px;top:122.8px" width="20" height="22" viewBox="0 0 20 22"><path d="M1 5 H18.6" stroke="#5a5a5a" stroke-width="1.5" stroke-linecap="round"/><path d="M7 4.6 Q7 1 9.8 1 Q12.6 1 12.6 4.6" fill="none" stroke="#5a5a5a" stroke-width="1.4"/><path d="M2.8 5.2 L4.2 18.2 Q4.5 20.6 6.8 20.6 H12.8 Q15.1 20.6 15.4 18.2 L16.8 5.2" fill="none" stroke="#5a5a5a" stroke-width="1.5"/><path d="M8 9.2 V16.2 M11.6 9.2 V16.2" stroke="#5a5a5a" stroke-width="1.5" stroke-linecap="round"/></svg><svg style="left:510px;top:127.6px" width="21" height="16" viewBox="0 0 21 16"><path d="M5.3 14.6 V1 M.8 5.4 L5.3 .9 L9.8 5.4" fill="none" stroke="#5a5a5a" stroke-width="1.3" stroke-linecap="round" stroke-linejoin="round"/><path d="M14.7 .8 V14.4 M10.2 10 L14.7 14.5 L19.2 10" fill="none" stroke="#1a86d9" stroke-width="1.3" stroke-linecap="round" stroke-linejoin="round"/></svg><svg style="left:664px;top:128px" width="21" height="14" viewBox="0 0 21 14"><path d="M.3 1 H20.4 M.3 4.75 H20.4 M.3 8.5 H20.4 M.3 12.25 H20.4" stroke="#5a5a5a" stroke-width="1.1"/></svg><svg style="left:829px;top:125.6px" width="20" height="20" viewBox="0 0 20 20"><path d="M3.2 10.6 A6.3 6.3 0 1 1 12.6 12.4" fill="none" stroke="#5a5a5a" stroke-width="1.3" stroke-linecap="round"/><path d="M12.6 12.4 L18.4 18.4" stroke="#5a5a5a" stroke-width="1.3" stroke-linecap="round"/><g transform="translate(5 14.3)"><path d="M0 -5 L1.4 -3.4 L3.5 -3.9 L3.6 -1.8 L5 -0.4 L3.7 1.2 L4 3.3 L1.9 3.5 L0.5 5 L-1.2 3.7 L-3.3 4 L-3.5 1.9 L-5 0.4 L-3.7 -1.2 L-4 -3.3 L-1.9 -3.5Z" fill="#1a86d9"/><circle r="1.5" fill="#fff"/></g></svg><svg style="left:1028px;top:126.4px" width="19" height="19" viewBox="0 0 19 19"><path d="M.8 .8 L17.8 17.8 M17.8 .8 L.8 17.8" stroke="#1a86d9" stroke-width="1.4" stroke-linecap="round"/></svg><div class=a style="left:1230.7px;top:131.5px;width:3.6px;height:3.6px;border-radius:50%;background:#1b1b1b"></div><div class=a style="left:1238.95px;top:131.5px;width:3.6px;height:3.6px;border-radius:50%;background:#1b1b1b"></div><div class=a style="left:1247.2px;top:131.5px;width:3.6px;height:3.6px;border-radius:50%;background:#1b1b1b"></div><svg style="left:1807px;top:127px" width="21" height="16" viewBox="0 0 21 16"><rect x=".8" y=".8" width="19.4" height="14" rx="3" fill="none" stroke="#5a5a5a" stroke-width="1.4"/><path d="M11.6 .8 H17 Q20.2 .8 20.2 4 V11.6 Q20.2 14.8 17 14.8 H11.6Z" fill="#eaf4fd" stroke="#1a86d9" stroke-width="1.4"/><path d="M14.4 5 H17.4 M14.4 7.8 H17.4 M14.4 10.6 H17.4" stroke="#1a86d9" stroke-width="1.1"/></svg><svg style="left:235px;top:162px" width="9" height="5" viewBox="0 0 9 5"><path d="M.5 4.4 L4.4 .6 L8.3 4.4" fill="none" stroke="#666" stroke-width="1"/></svg><div class=a style="left:1843px;top:984px;width:36px;height:36px;box-sizing:border-box;border:1px solid #0a7ad6;background:#e5f3fb"></div><svg style="left:1855px;top:997px" width="14" height="13" viewBox="0 0 14 13"><path d="M0 .5 H14 M0 4.5 H14 M0 8.5 H14 M0 12.5 H14" stroke="#555" stroke-width="1"/></svg><svg style="left:1890px;top:995px" width="14" height="14" viewBox="0 0 14 14"><rect x=".5" y=".7" width="13" height="10.6" fill="none" stroke="#555" stroke-width="1"/><path d="M0 13.5 H14" stroke="#555" stroke-width="1"/></svg><svg style="left:0;top:0" width="0" height="0"><defs><linearGradient id="gsun" x1="0" y1="0" x2="1" y2="1"><stop offset="0" stop-color="#f7c92e"/><stop offset=".55" stop-color="#f79a13"/><stop offset="1" stop-color="#f26a0a"/></linearGradient><linearGradient id="gcl" x1="0" y1="0" x2="0" y2="1"><stop offset="0" stop-color="#f2f6fd"/><stop offset=".6" stop-color="#c4d8f6"/><stop offset="1" stop-color="#8fb4ec"/></linearGradient><linearGradient id="gwin" x1="0" y1="0" x2="1" y2="1"><stop offset="0" stop-color="#7ad2fb"/><stop offset=".5" stop-color="#38bdf9"/><stop offset="1" stop-color="#0a8cec"/></linearGradient><linearGradient id="gtv1" x1="0" y1="0" x2="1" y2="1"><stop offset="0" stop-color="#ffffff"/><stop offset="1" stop-color="#d4d4d4"/></linearGradient><linearGradient id="gtv2" x1="0" y1="0" x2="1" y2="1"><stop offset="0" stop-color="#8a8a8a"/><stop offset="1" stop-color="#5a5a5a"/></linearGradient><linearGradient id="gbag" x1="0" y1="0" x2="0" y2="1"><stop offset="0" stop-color="#ffffff"/><stop offset="1" stop-color="#dcdcdc"/></linearGradient><linearGradient id="gfol" x1="0" y1="0" x2="1" y2="1"><stop offset="0" stop-color="#ffe07a"/><stop offset="1" stop-color="#f7b50d"/></linearGradient><linearGradient id="gedge1" x1="0" y1="0" x2="1" y2="0"><stop offset="0" stop-color="#2fbdf4"/><stop offset=".55" stop-color="#2ec3c4"/><stop offset="1" stop-color="#66dc52"/></linearGradient><linearGradient id="gedge2" x1="0" y1="0" x2="1" y2="1"><stop offset="0" stop-color="#1e9be3"/><stop offset="1" stop-color="#0b4f9c"/></linearGradient><linearGradient id="gop" x1="0" y1="0" x2="1" y2="1"><stop offset="0" stop-color="#ff2235"/><stop offset="1" stop-color="#c20716"/></linearGradient><linearGradient id="gop2" x1="0" y1="0" x2="0" y2="1"><stop offset="0" stop-color="#a80a12"/><stop offset="1" stop-color="#ff4a4f"/></linearGradient><linearGradient id="gtb" x1="0" y1="0" x2="1" y2="1"><stop offset="0" stop-color="#2c8cf0"/><stop offset="1" stop-color="#0b46a6"/></linearGradient><linearGradient id="genv" x1="0" y1="0" x2="0" y2="1"><stop offset="0" stop-color="#ffffff"/><stop offset="1" stop-color="#b9dcfb"/></linearGradient><linearGradient id="gred" x1="0" y1="0" x2="0" y2="1"><stop offset="0" stop-color="#d40000"/><stop offset="1" stop-color="#a30000"/></linearGradient><linearGradient id="gsilver" x1="0" y1="0" x2="1" y2="1"><stop offset="0" stop-color="#cfd6e0"/><stop offset=".5" stop-color="#8e99ab"/><stop offset="1" stop-color="#d5dbe4"/></linearGradient><linearGradient id="gscr" x1="0" y1="0" x2="1" y2="1"><stop offset="0" stop-color="#3a5f9e"/><stop offset="1" stop-color="#1a2c66"/></linearGradient></defs></svg><svg style="left:24px;top:1032px" width="34" height="32" viewBox="0 0 34 32"><circle cx="16.2" cy="17.4" r="12.3" fill="url(#gsun)"/>
<path d="M2.6 13 Q.6 13 .8 10.6 Q1 8.4 3.4 8.4 Q4 4.6 7.6 3.4 Q11 2.2 13.4 5.6 Q15.8 5.2 16.6 7.6 Q17 12.8 14.6 13Z" fill="url(#gcl)"/>
<path d="M15.6 28.4 Q13.6 28.4 13.8 26 Q14 23.8 16.4 23.8 Q17 20 20.6 18.8 Q24 17.6 26.4 21 Q28.8 20.6 30.4 23 Q31.6 28.2 28.6 28.4Z" fill="url(#gcl)"/>
<circle cx="24.6" cy="5.6" r="9.8" fill="#c42b1c"/></svg><svg style="left:46px;top:1032.6px" width="6" height="11" viewBox="0 0 6 11"><path d="M.7 3.1 L3.9 .9 V10.4" fill="none" stroke="#fff" stroke-width="1.7" stroke-linejoin="miter"/></svg><svg style="left:420px;top:1036px" width="30" height="30" viewBox="0 0 30 30"><path d="M0 1.6 Q0 0 1.6 0 H13.9 V13.9 H0Z M15.3 0 H27.6 Q29.2 0 29.2 1.6 V13.9 H15.3Z M0 15.3 H13.9 V29.2 H1.6 Q0 29.2 0 27.6Z M15.3 15.3 H29.2 V27.6 Q29.2 29.2 27.6 29.2 H15.3Z" fill="url(#gwin)"/></svg><div class=a style="left:467px;top:1030.7px;width:273px;height:38.2px;border-radius:19.1px;background:#f2f2f4"></div><svg style="left:480px;top:1040px" width="22" height="22" viewBox="0 0 22 22"><circle cx="8.9" cy="8.6" r="6.7" fill="#e6e6e8" stroke="#1c1c1c" stroke-width="1.9"/><path d="M13.8 13.6 L18.4 18.3" stroke="#1c1c1c" stroke-width="2.3" stroke-linecap="round"/></svg><svg style="left:756px;top:1036px" width="31" height="28" viewBox="0 0 31 28"><rect x="0" y="7.8" width="22.5" height="19.8" rx="1.6" fill="url(#gtv2)"/><rect x="7.3" y="0" width="22.8" height="20.4" rx="2" fill="url(#gtv1)"/><rect x="7.3" y="7.8" width="15.2" height="12.6" fill="#8c8c8c" opacity=".55"/></svg><svg style="left:811px;top:1036px" width="30" height="28" viewBox="0 0 30 28"><circle cx="24.7" cy="6.3" r="3.2" fill="#5059c9"/><path d="M20.6 11 H29.4 V18.6 Q29.4 23 25.2 23 Q22.4 23 20.6 20Z" fill="#5059c9"/>
<circle cx="15.3" cy="5.1" r="4.5" fill="#7b83eb"/><path d="M9 11 H22.8 V20 Q22.8 27 15.8 27 Q9 27 9 20Z" fill="#7b83eb"/>
<rect x="0" y="6.4" width="14.8" height="15" rx="1.2" fill="#4b53bc"/><path d="M3.8 10.2 H11 M7.4 10.2 V18.2" stroke="#fff" stroke-width="1.5"/></svg><svg style="left:865.8px;top:1034.7px" width="31" height="31" viewBox="0 0 31 31"><rect width="30.5" height="30.5" fill="#fff"/>
<path d="M4.2 12.1 H13.3 V16.3 H4.2Z M17.2 12.1 H25.5 V16.3 H17.2Z" fill="#c80000"/>
<path d="M5.4 17.7 H13.3 V27.1 H5.4Z M17.2 17.7 H24.6 V27.1 H17.2Z" fill="url(#gred)"/>
<path d="M14.6 9.4 Q10 10.4 7 9 Q4.6 7 6.6 4.4 Q9 2.6 11.6 5 Q13.6 7 14.8 9.4 Q16.4 6.4 18.6 4.6 Q21.4 2.8 23.6 4.8 Q25.4 7.4 22.6 9.2 Q19 10.4 14.8 9.4" fill="none" stroke="#e00000" stroke-width="1.3"/></svg><svg style="left:920.8px;top:1035.5px" width="30" height="30" viewBox="0 0 30 30"><path d="M8 6.4 V2.4 Q8 1.2 9.2 1.2 H20.2 Q21.4 1.2 21.4 2.4 V6.4" fill="none" stroke="#1fa7f2" stroke-width="1.8"/>
<path d="M0 5.6 Q0 4 1.6 4 H27.6 Q29.2 4 29.2 5.6 V24.2 Q29.2 29.7 23.7 29.7 H5.5 Q0 29.7 0 24.2Z" fill="url(#gbag)"/>
<rect x="9.2" y="11.5" width="4.9" height="4.9" fill="#f25022"/><rect x="15.2" y="11.5" width="4.9" height="4.9" fill="#7fba00"/><rect x="9.2" y="17.5" width="4.9" height="4.9" fill="#00a4ef"/><rect x="15.2" y="17.5" width="4.9" height="4.9" fill="#ffb900"/></svg><svg style="left:976px;top:1036.5px" width="31" height="27" viewBox="0 0 31 27"><clipPath id="cpo"><path d="M4.4 9 L17.3 .3 L29.8 7.6 V23.5 Q29.8 26.6 26.7 26.6 H7.4 Q4.4 26.6 4.4 23.6Z"/></clipPath>
<g clip-path="url(#cpo)"><rect width="31" height="27" fill="#28a8ea"/>
<path d="M15 9.2 L24.4 4.2 L31 8 V9 L15 17Z" fill="#1a94e0"/>
<path d="M15 12 L31 4.2 V10 L15 19.5Z" fill="#0a59b8"/>
<path d="M4 20 L15 19 L31 10.2 V14 L12 27 H4Z" fill="#1b86d8"/>
<path d="M12 27 L31 13.4 V27Z" fill="#45cdf5"/></g>
<rect x="0" y="6.5" width="15.2" height="15" rx="1.2" fill="#0f6cd0"/><ellipse cx="7.6" cy="14" rx="4.2" ry="4.7" fill="none" stroke="#fff" stroke-width="1.9"/></svg><div class=a style="left:1021px;top:1025px;width:49.5px;height:50px;border-radius:5px;background:rgba(255,255,255,.085);box-shadow:inset 0 0 0 1px rgba(255,255,255,.04)"></div><svg style="left:1030.8px;top:1036.8px" width="31" height="27" viewBox="0 0 31 27"><path d="M0 2.2 Q0 0 2.2 0 H9.6 Q10.8 0 11.6 .9 L13.6 3 H28 Q30.2 3 30.2 5.2 V26.4 H0Z" fill="#e5a50a"/>
<path d="M0 6.4 Q0 4.6 1.8 4.6 L12 4.6 L14 3 H28.4 Q30.2 3 30.2 4.8 V24.6 Q30.2 26.4 28.4 26.4 H1.8 Q0 26.4 0 24.6Z" fill="url(#gfol)"/>
<path d="M5.2 26.4 V22 Q5.2 19.2 8 19.2 H22.2 Q25 19.2 25 22 V26.4Z" fill="#1b7ad3"/><path d="M8.4 22.7 H21.8" stroke="#0b4c9c" stroke-width="1.3" stroke-linecap="round"/></svg><div class=a style="left:1035.8px;top:1069.9px;width:20.2px;height:3.9px;border-radius:2px;background:#4cc2ff"></div><div class=a style="left:1096.9px;top:1069.9px;width:8.2px;height:4px;border-radius:2px;background:#a39ea8"></div><div class=a style="left:1151.9px;top:1069.9px;width:8.2px;height:4px;border-radius:2px;background:#a39ea8"></div><div class=a style="left:1206.9px;top:1069.9px;width:8.2px;height:4px;border-radius:2px;background:#a39ea8"></div><div class=a style="left:1261.9px;top:1069.9px;width:8.2px;height:4px;border-radius:2px;background:#a39ea8"></div><div class=a style="left:1316.9px;top:1069.9px;width:8.2px;height:4px;border-radius:2px;background:#a39ea8"></div><div class=a style="left:1426.9px;top:1069.9px;width:8.2px;height:4px;border-radius:2px;background:#a39ea8"></div><div class=a style="left:1481.9px;top:1069.9px;width:8.2px;height:4px;border-radius:2px;background:#a39ea8"></div><svg style="left:1085.8px;top:1034.7px" width="31" height="31" viewBox="0 0 31 31"><circle cx="15.2" cy="15.2" r="15.2" fill="url(#gedge2)"/>
<path d="M.2 13.4 Q1.6 2 12.6 .2 Q22 -.8 27.6 6.4 Q31.6 12.4 29.4 16.6 Q27.4 20 22 20 Q17.6 20 17.2 17.2 Q19.8 14.8 18 11.6 Q15.4 8.2 10.4 8.6 Q3.8 9.6 .2 13.4Z" fill="url(#gedge1)"/>
<path d="M10.6 14.6 Q11 10.4 15 10.6 Q18.6 11.4 18.2 15 Q17.6 17 16.8 17.4 Q17.2 20.6 22 21 Q25.6 21 28 19 Q24 27 16 24.6 Q10.4 21.4 10.6 14.6Z" fill="#2b1d38"/>
<circle cx="7.4" cy="22.7" r="6.9" fill="#dcdad6"/><circle cx="7.4" cy="20.2" r="2.7" fill="#9b9893"/><path d="M2.6 27 Q2.8 23.8 7.4 23.8 Q12 23.8 12.2 27 Q10 29.6 7.4 29.6 Q4.8 29.6 2.6 27Z" fill="#a5a29d"/></svg><svg style="left:1140.6px;top:1034.7px" width="31" height="31" viewBox="0 0 31 31"><circle cx="15.2" cy="15.2" r="15.2" fill="#fff"/>
<path d="M15.2 15.2 L2.04 7.6 A15.2 15.2 0 0 1 28.36 7.6Z" fill="#ea4335"/>
<path d="M15.2 15.2 L28.36 7.6 A15.2 15.2 0 0 1 15.2 30.4Z" fill="#fbbc05"/>
<path d="M15.2 15.2 L15.2 30.4 A15.2 15.2 0 0 1 2.04 7.6Z" fill="#34a853"/>
<path d="M15.2 7.6 H28.36 A15.2 15.2 0 0 0 2.04 7.6 L8.6 19 Z" fill="#ea4335"/>
<path d="M21.8 19 L15.2 30.4 A15.2 15.2 0 0 0 28.36 7.6 H15.2Z" fill="#fbbc05"/>
<path d="M8.6 19 L2.04 7.6 A15.2 15.2 0 0 0 15.2 30.4 L21.8 19Z" fill="#34a853"/>
<circle cx="15.2" cy="15.2" r="7.7" fill="#fff"/><circle cx="15.2" cy="15.2" r="6.2" fill="#4285f4"/></svg><svg style="left:1196.4px;top:1035.2px" width="29" height="29" viewBox="0 0 29 29"><path fill-rule="evenodd" d="M14.3 0 A14.3 14.4 0 1 0 14.3 28.8 A14.3 14.4 0 1 0 14.3 0Z M14.7 3 A7.1 11.5 0 1 1 14.7 26 A7.1 11.5 0 1 1 14.7 3Z" fill="url(#gop)"/>
<path fill-rule="evenodd" d="M18.4 1.2 Q27.6 4 28.6 14.4 Q27.6 25 18.4 27.6 Q23.4 24 23.4 14.4 Q23.4 5 18.4 1.2Z" fill="url(#gop2)" opacity=".75"/></svg><svg style="left:1250.6px;top:1036px" width="31" height="30" viewBox="0 0 31 30"><path d="M6.4 2.4 Q8.8 5.4 8.2 8.4 Q13 4.4 18.6 5 Q26.6 6.2 29.6 13.4 Q32 22 25.4 27 Q17.6 31.6 9 28 Q1.8 24.4 .4 16.4 Q-.2 11.8 2 9 Q2 12 3.4 13 Q3 6.6 6.4 2.4Z" fill="url(#gtb)"/>
<path d="M12 6.4 Q14 2.6 17.6 1.2 Q17 3.4 18 5.2Z" fill="#8a7be6"/>
<ellipse cx="14.8" cy="13.9" rx="7.4" ry="6.2" fill="url(#genv)"/><path d="M7.8 11.4 L14.8 16.8 L21.8 11.4 L22.2 14 Q22.2 20 14.8 20.1 Q7.4 20 7.4 14Z" fill="#d6ebfc"/><path d="M7.8 11.4 L14.8 16.8 L21.8 11.4" fill="none" stroke="#bcd9f5" stroke-width=".7"/>
<path d="M8 22.8 Q14 26.4 21.2 22.6 Q16 23.6 12 21.8Z" fill="#cfe6fb" opacity=".7"/>
<circle cx="26.5" cy="2.7" r="8.6" fill="#f0003c"/></svg><svg style="left:1305.5px;top:1034.5px" width="38" height="32" viewBox="0 0 38 32"><path d="M15.8 2 A13.4 13.4 0 1 1 9.4 27.2 L2.6 29 L4.4 22.6 A13.4 13.4 0 0 1 15.8 2Z" fill="none" stroke="#25d366" stroke-width="3"/>
<path d="M9.6 9.2 Q11 7.6 12.2 8.8 L13.8 12 Q14 13 12.8 14 Q14.6 18 18.4 19.4 Q19.4 18 20.4 18 L23.6 19.6 Q24.4 20.6 23.2 22.2 Q21 24.4 17.4 22.8 Q11.4 20 9 13.6 Q8.2 11 9.6 9.2Z" fill="#25d366"/>
<circle cx="26.6" cy="4.5" r="10" fill="#4cc2ff"/></svg><svg style="left:1329.4px;top:1033.2px" width="6" height="12" viewBox="0 0 6 12"><path d="M.6 3.4 L4 1 V11.4" fill="none" stroke="#000" stroke-width="1.4" stroke-linejoin="miter"/></svg><svg style="left:1361px;top:1037.8px" width="30" height="23" viewBox="0 0 30 23"><rect width="29" height="22.5" fill="url(#gsilver)"/><rect x="1.6" y="1.6" width="25.8" height="19.3" fill="url(#gscr)"/>
<rect x="1.6" y="18.6" width="25.8" height="2.2" fill="#2b2b2b"/>
<rect x="5.6" y="4" width="8" height="9.4" fill="#dfe8ee"/><rect x="6.4" y="5.4" width="4" height="7" fill="#49a77c"/>
<rect x="9.4" y="6" width="8.6" height="9.6" fill="#e6ecf0"/><rect x="10.2" y="7.4" width="4" height="7" fill="#3d9aa0"/>
<rect x="13.2" y="7.8" width="9.4" height="9.8" fill="#f2f5f7"/><rect x="14" y="9.2" width="4.4" height="7.2" fill="#45a57e"/>
<path d="M3.8 17.4 L4.6 19.6 L5.4 17.4Z" fill="#d8b53a"/></svg><svg style="left:1416px;top:1036px" width="30" height="28" viewBox="0 0 30 28"><rect x="6.9" y="0" width="11.1" height="7" fill="#21a366"/><rect x="18" y="0" width="11.2" height="7" fill="#33c481"/>
<rect x="6.9" y="7" width="11.1" height="7" fill="#107c41"/><rect x="18" y="7" width="11.2" height="7" fill="#21a366"/>
<rect x="6.9" y="14" width="11.1" height="7" fill="#185c37"/><rect x="18" y="14" width="11.2" height="7" fill="#107c41"/>
<rect x="6.9" y="21" width="22.3" height="6.3" fill="#185c37"/>
<rect x="1" y="7.2" width="15" height="15" fill="#000" opacity=".25"/>
<rect x="0" y="6.4" width="15" height="15" rx="1" fill="#107c41"/><path d="M4.4 10 L10.6 18 M10.6 10 L4.4 18" stroke="#fff" stroke-width="2"/></svg><svg style="left:1471px;top:1036px" width="30" height="28" viewBox="0 0 30 28"><rect x="6.9" y="0" width="22.3" height="7" fill="#41a5ee"/><rect x="6.9" y="7" width="22.3" height="7" fill="#2b7cd3"/>
<rect x="6.9" y="14" width="22.3" height="7" fill="#185abd"/><rect x="6.9" y="21" width="22.3" height="6.3" fill="#103f91"/>
<rect x="1" y="7.2" width="15.2" height="15" fill="#000" opacity=".25"/>
<rect x="0" y="6.4" width="15.2" height="15" rx="1" fill="#185abd"/><path d="M2.8 10 L5 18 L7.6 10.6 L10.2 18 L12.4 10" fill="none" stroke="#fff" stroke-width="1.7" stroke-linejoin="round"/></svg><svg style="left:1685px;top:1045px" width="16" height="10" viewBox="0 0 16 10"><path d="M1.2 8.2 L7.9 1.5 L14.6 8.2" fill="none" stroke="#fff" stroke-width="1.8" stroke-linecap="round" stroke-linejoin="round"/></svg><svg style="left:1722px;top:1041px" width="22" height="17" viewBox="0 0 22 17"><circle cx="11" cy="14.3" r="1.8" fill="#fff"/>
<path d="M7.4 10.6 A5 5 0 0 1 14.6 10.6" fill="none" stroke="#fff" stroke-width="1.5" stroke-linecap="round"/>
<path d="M4.6 8 A8.9 8.9 0 0 1 17.4 8" fill="none" stroke="#fff" stroke-width="1.5" stroke-linecap="round"/>
<path d="M1.7 5.3 A12.9 12.9 0 0 1 20.3 5.3" fill="none" stroke="#fff" stroke-width="1.5" stroke-linecap="round"/></svg><svg style="left:1752px;top:1040px" width="22" height="20" viewBox="0 0 22 20"><path d="M1.6 7 H5.4 L9.8 3.4 V16.6 L5.4 13 H1.6Z" fill="none" stroke="#fff" stroke-width="1.4" stroke-linejoin="round"/>
<path d="M12.4 6.8 Q14.4 10 12.4 13.2" fill="none" stroke="#fff" stroke-width="1.4" stroke-linecap="round"/>
<path d="M15.2 4.4 Q18.6 10 15.2 15.6" fill="none" stroke="#6f766c" stroke-width="1.3" stroke-linecap="round"/>
<path d="M18 1.8 Q22.6 10 18 18.2" fill="none" stroke="#5d645b" stroke-width="1.3" stroke-linecap="round"/></svg><svg style="left:1782px;top:1039px" width="23" height="19" viewBox="0 0 23 19"><rect x="1.5" y="4.9" width="18.2" height="12.4" rx="3" fill="none" stroke="#fff" stroke-width="1.4"/>
<path d="M19.8 9 H20.6 Q21.4 9 21.4 9.8 V12.4 Q21.4 13.2 20.6 13.2 H19.8Z" fill="#fff"/>
<path d="M3.4 14.2 Q3.4 15.4 4.6 15.4 H16.6 Q17.8 15.4 17.8 14.2 V8 Q17.8 6.8 16.6 6.8 H8.6 L5 13 H3.4Z" fill="#fff"/>
<path d="M5.4 .8 L1.6 7.4 H4.2 L2.4 12.6 L7.8 5.4 H5 L7 .8Z" fill="#fff" stroke="#242a21" stroke-width=".8"/></svg>
<span class=t style='left:117.25px;top:169.00px;font-size:15.37px;line-height:17px;letter-spacing:0.000px;color:#4c607a;'>Name</span><span class=t style='left:397.25px;top:169.00px;font-size:15.1px;line-height:17px;letter-spacing:0.000px;color:#4c607a;'>Änderungsdatum</span><span class=t style='left:578.25px;top:170.00px;font-size:14.26px;line-height:16px;letter-spacing:0.000px;color:#4c607a;'>Typ</span><span class=t style='left:727.25px;top:170.00px;font-size:14.47px;line-height:16px;letter-spacing:0.000px;color:#4c607a;'>Größe</span><span class=t style='left:141.75px;top:207.00px;font-size:15.45px;line-height:17px;letter-spacing:0.001px;color:#000;'>https+++www.paypal.com</span><span class=t style='left:397.75px;top:208.00px;font-size:14.06px;line-height:16px;letter-spacing:0.000px;color:#6a6a6a;'>03.04.2025 22:52</span><span class=t style='left:578.25px;top:207.00px;font-size:15.4px;line-height:17px;letter-spacing:0.000px;color:#6a6a6a;'>Dateiordner</span><span class=t style='left:141.75px;top:234.00px;font-size:15.02px;line-height:17px;letter-spacing:0.000px;color:#000;'>pending_pings</span><span class=t style='left:397.75px;top:235.00px;font-size:14.06px;line-height:16px;letter-spacing:0.000px;color:#6a6a6a;'>05.09.2025 13:18</span><span class=t style='left:578.25px;top:234.00px;font-size:15.4px;line-height:17px;letter-spacing:0.000px;color:#6a6a6a;'>Dateiordner</span><span class=t style='left:141.75px;top:261.00px;font-size:15.22px;line-height:17px;letter-spacing:0.000px;color:#000;'>permanent</span><span class=t style='left:397.75px;top:262.00px;font-size:14.06px;line-height:16px;letter-spacing:0.000px;color:#6a6a6a;'>18.09.2023 17:45</span><span class=t style='left:578.25px;top:261.00px;font-size:15.4px;line-height:17px;letter-spacing:0.000px;color:#6a6a6a;'>Dateiordner</span><span class=t style='left:141.75px;top:288.00px;font-size:15.22px;line-height:17px;letter-spacing:0.000px;color:#000;'>saved-telemetry-pings</span><span class=t style='left:397.75px;top:289.00px;font-size:14.06px;line-height:16px;letter-spacing:0.000px;color:#000;'>05.09.2025 13:07</span><span class=t style='left:578.25px;top:288.00px;font-size:15.4px;line-height:17px;letter-spacing:0.000px;color:#000;'>Dateiordner</span><span class=t style='left:141.75px;top:315.00px;font-size:15.23px;line-height:17px;letter-spacing:0.000px;color:#000;'>aborted-session-ping</span><span class=t style='left:397.75px;top:316.00px;font-size:14.06px;line-height:16px;letter-spacing:0.000px;color:#6a6a6a;'>05.09.2025 14:07</span><span class=t style='left:578.25px;top:315.00px;font-size:15.31px;line-height:17px;letter-spacing:-0.000px;color:#6a6a6a;'>Datei</span><span class=t style='left:782.25px;top:316.00px;font-size:13.95px;line-height:16px;letter-spacing:-0.418px;color:#6a6a6a;'>8 KB</span><span class=t style='left:141.75px;top:342.00px;font-size:15.41px;line-height:17px;letter-spacing:0.000px;color:#000;'>bounce-tracking-protection.sqlite</span><span class=t style='left:397.75px;top:343.00px;font-size:14.06px;line-height:16px;letter-spacing:0.000px;color:#6a6a6a;'>05.09.2025 13:07</span><span class=t style='left:578.25px;top:343.00px;font-size:14.14px;line-height:16px;letter-spacing:0.000px;color:#6a6a6a;'>SQLITE-Datei</span><span class=t style='left:774.25px;top:343.00px;font-size:13.95px;line-height:16px;letter-spacing:-0.253px;color:#6a6a6a;'>96 KB</span><span class=t style='left:141.75px;top:369.00px;font-size:15.21px;line-height:17px;letter-spacing:0.000px;color:#000;'>content-prefs.sqlite</span><span class=t style='left:397.75px;top:370.00px;font-size:14.06px;line-height:16px;letter-spacing:0.000px;color:#6a6a6a;'>30.01.2025 17:35</span><span class=t style='left:578.25px;top:370.00px;font-size:14.14px;line-height:16px;letter-spacing:0.000px;color:#6a6a6a;'>SQLITE-Datei</span><span class=t style='left:766.25px;top:370.00px;font-size:13.95px;line-height:16px;letter-spacing:-0.155px;color:#6a6a6a;'>224 KB</span><span class=t style='left:141.75px;top:397.00px;font-size:14.7px;line-height:16px;letter-spacing:0.000px;color:#000;'>extension-preferences.json</span><span class=t style='left:397.75px;top:397.00px;font-size:14.06px;line-height:16px;letter-spacing:0.000px;color:#6a6a6a;'>18.09.2023 17:54</span><span class=t style='left:577.50px;top:397.00px;font-size:14.53px;line-height:16px;letter-spacing:0.000px;color:#6a6a6a;'>JSON-Datei</span><span class=t style='left:782.25px;top:397.00px;font-size:13.95px;line-height:16px;letter-spacing:-0.418px;color:#6a6a6a;'>1 KB</span><span class=t style='left:141.75px;top:423.00px;font-size:14.94px;line-height:17px;letter-spacing:0.000px;color:#000;'>Papierkorb</span><span class=t style='left:397.75px;top:424.00px;font-size:14.2px;line-height:16px;letter-spacing:0.000px;color:#6a6a6a;'>04.09.2025 11:31</span><span class=t style='left:578.25px;top:423.00px;font-size:15.31px;line-height:17px;letter-spacing:-0.000px;color:#6a6a6a;'>Datei</span><span class=t style='left:766.25px;top:424.00px;font-size:13.95px;line-height:16px;letter-spacing:-0.155px;color:#6a6a6a;'>519 KB</span><span class=t style='left:141.75px;top:450.00px;font-size:14.94px;line-height:17px;letter-spacing:0.000px;color:#000;'>Papierkorb</span><span class=t style='left:397.75px;top:451.00px;font-size:14.06px;line-height:16px;letter-spacing:0.000px;color:#6a6a6a;'>01.03.2021 15:03</span><span class=t style='left:578.25px;top:450.00px;font-size:15.31px;line-height:17px;letter-spacing:-0.000px;color:#6a6a6a;'>Datei</span><span class=t style='left:755.25px;top:451.00px;font-size:13.95px;line-height:16px;letter-spacing:-0.200px;color:#6a6a6a;'>1.070 KB</span><span class=t style='left:141.75px;top:477.00px;font-size:14.94px;line-height:17px;letter-spacing:0.000px;color:#000;'>Papierkorb</span><span class=t style='left:397.75px;top:478.00px;font-size:14.06px;line-height:16px;letter-spacing:0.000px;color:#6a6a6a;'>17.08.2025 12:10</span><span class=t style='left:578.25px;top:477.00px;font-size:15.31px;line-height:17px;letter-spacing:-0.000px;color:#6a6a6a;'>Datei</span><span class=t style='left:774.25px;top:478.00px;font-size:13.95px;line-height:16px;letter-spacing:-0.253px;color:#6a6a6a;'>30 KB</span><span class=t style='left:141.75px;top:504.00px;font-size:14.94px;line-height:17px;letter-spacing:0.000px;color:#000;'>Papierkorb</span><span class=t style='left:397.75px;top:505.00px;font-size:14.2px;line-height:16px;letter-spacing:0.000px;color:#6a6a6a;'>04.09.2025 11:31</span><span class=t style='left:578.25px;top:504.00px;font-size:15.31px;line-height:17px;letter-spacing:-0.000px;color:#6a6a6a;'>Datei</span><span class=t style='left:755.25px;top:505.00px;font-size:13.95px;line-height:16px;letter-spacing:-0.200px;color:#6a6a6a;'>5.818 KB</span><span class=t style='left:141.75px;top:532.00px;font-size:14.8px;line-height:16px;letter-spacing:0.000px;color:#000;'>Papierkorb.msf</span><span class=t style='left:397.75px;top:532.00px;font-size:14.2px;line-height:16px;letter-spacing:0.000px;color:#6a6a6a;'>04.09.2025 11:37</span><span class=t style='left:578.25px;top:532.00px;font-size:14.54px;line-height:16px;letter-spacing:0.000px;color:#6a6a6a;'>MSF-Datei</span><span class=t style='left:774.25px;top:532.00px;font-size:13.95px;line-height:16px;letter-spacing:-0.253px;color:#6a6a6a;'>14 KB</span><span class=t style='left:141.75px;top:559.00px;font-size:14.8px;line-height:16px;letter-spacing:0.000px;color:#000;'>Papierkorb.msf</span><span class=t style='left:397.75px;top:559.00px;font-size:14.06px;line-height:16px;letter-spacing:0.000px;color:#6a6a6a;'>01.03.2021 21:20</span><span class=t style='left:578.25px;top:559.00px;font-size:14.54px;line-height:16px;letter-spacing:0.000px;color:#6a6a6a;'>MSF-Datei</span><span class=t style='left:774.25px;top:559.00px;font-size:13.95px;line-height:16px;letter-spacing:-0.253px;color:#6a6a6a;'>13 KB</span><span class=t style='left:141.75px;top:586.00px;font-size:14.8px;line-height:16px;letter-spacing:0.000px;color:#000;'>Papierkorb.msf</span><span class=t style='left:397.75px;top:586.00px;font-size:14.06px;line-height:16px;letter-spacing:0.000px;color:#6a6a6a;'>17.08.2025 12:10</span><span class=t style='left:578.25px;top:586.00px;font-size:14.54px;line-height:16px;letter-spacing:0.000px;color:#6a6a6a;'>MSF-Datei</span><span class=t style='left:782.25px;top:586.00px;font-size:13.95px;line-height:16px;letter-spacing:-0.418px;color:#6a6a6a;'>7 KB</span><span class=t style='left:141.75px;top:613.00px;font-size:14.8px;line-height:16px;letter-spacing:0.000px;color:#000;'>Papierkorb.msf</span><span class=t style='left:397.75px;top:613.00px;font-size:14.2px;line-height:16px;letter-spacing:0.000px;color:#6a6a6a;'>04.09.2025 11:37</span><span class=t style='left:578.25px;top:613.00px;font-size:14.54px;line-height:16px;letter-spacing:0.000px;color:#6a6a6a;'>MSF-Datei</span><span class=t style='left:774.25px;top:613.00px;font-size:13.95px;line-height:16px;letter-spacing:-0.253px;color:#6a6a6a;'>55 KB</span><span class=t style='left:141.75px;top:639.00px;font-size:15.13px;line-height:17px;letter-spacing:0.000px;color:#000;'>parent.lock</span><span class=t style='left:397.75px;top:640.00px;font-size:14.06px;line-height:16px;letter-spacing:0.000px;color:#6a6a6a;'>05.09.2025 13:06</span><span class=t style='left:578.25px;top:640.00px;font-size:14.24px;line-height:16px;letter-spacing:0.000px;color:#6a6a6a;'>LOCK-Datei</span><span class=t style='left:782.25px;top:640.00px;font-size:13.95px;line-height:16px;letter-spacing:-0.418px;color:#6a6a6a;'>0 KB</span><span class=t style='left:141.75px;top:667.00px;font-size:14.75px;line-height:16px;letter-spacing:0.000px;color:#000;'>permissions.sqlite</span><span class=t style='left:397.75px;top:667.00px;font-size:14.06px;line-height:16px;letter-spacing:0.000px;color:#6a6a6a;'>05.09.2025 13:51</span><span class=t style='left:578.25px;top:667.00px;font-size:14.14px;line-height:16px;letter-spacing:0.000px;color:#6a6a6a;'>SQLITE-Datei</span><span class=t style='left:766.25px;top:667.00px;font-size:13.95px;line-height:16px;letter-spacing:-0.155px;color:#6a6a6a;'>256 KB</span><span class=t style='left:141.75px;top:694.00px;font-size:14.85px;line-height:16px;letter-spacing:0.000px;color:#000;'>pkcs11.txt</span><span class=t style='left:397.75px;top:694.00px;font-size:14.06px;line-height:16px;letter-spacing:0.000px;color:#6a6a6a;'>25.08.2019 12:44</span><span class=t style='left:578.25px;top:693.00px;font-size:15.14px;line-height:17px;letter-spacing:-0.000px;color:#6a6a6a;'>Textdokument</span><span class=t style='left:782.25px;top:694.00px;font-size:13.95px;line-height:16px;letter-spacing:-0.418px;color:#6a6a6a;'>1 KB</span><span class=t style='left:141.75px;top:721.00px;font-size:14.81px;line-height:16px;letter-spacing:0.000px;color:#000;'>places.sqlite</span><span class=t style='left:397.75px;top:721.00px;font-size:14.06px;line-height:16px;letter-spacing:0.000px;color:#6a6a6a;'>05.09.2025 13:20</span><span class=t style='left:578.25px;top:721.00px;font-size:14.14px;line-height:16px;letter-spacing:0.000px;color:#6a6a6a;'>SQLITE-Datei</span><span class=t style='left:755.25px;top:721.00px;font-size:13.95px;line-height:16px;letter-spacing:-0.200px;color:#6a6a6a;'>5.120 KB</span><span class=t style='left:141.75px;top:748.00px;font-size:14.82px;line-height:16px;letter-spacing:0.000px;color:#000;'>places.sqlite-shm</span><span class=t style='left:397.75px;top:748.00px;font-size:14.06px;line-height:16px;letter-spacing:0.000px;color:#6a6a6a;'>05.09.2025 13:06</span><span class=t style='left:578.25px;top:748.00px;font-size:14.32px;line-height:16px;letter-spacing:0.000px;color:#6a6a6a;'>SQLITE-SHM-Datei</span><span class=t style='left:774.25px;top:748.00px;font-size:13.95px;line-height:16px;letter-spacing:-0.253px;color:#6a6a6a;'>32 KB</span><span class=t style='left:141.75px;top:774.00px;font-size:15.03px;line-height:17px;letter-spacing:0.000px;color:#000;'>places.sqlite-wal</span><span class=t style='left:397.75px;top:775.00px;font-size:14.06px;line-height:16px;letter-spacing:0.000px;color:#6a6a6a;'>05.09.2025 13:20</span><span class=t style='left:578.25px;top:775.00px;font-size:14.24px;line-height:16px;letter-spacing:0.000px;color:#6a6a6a;'>SQLITE-WAL-Datei</span><span class=t style='left:755.25px;top:775.00px;font-size:13.95px;line-height:16px;letter-spacing:-0.200px;color:#6a6a6a;'>2.242 KB</span><span class=t style='left:141.75px;top:801.00px;font-size:15.45px;line-height:17px;letter-spacing:0.034px;color:#000;'>pluginreg.dat</span><span class=t style='left:397.75px;top:802.00px;font-size:14.06px;line-height:16px;letter-spacing:0.000px;color:#6a6a6a;'>13.10.2021 16:55</span><span class=t style='left:578.25px;top:801.00px;font-size:15.31px;line-height:17px;letter-spacing:0.000px;color:#6a6a6a;'>DAT-Datei</span><span class=t style='left:782.25px;top:802.00px;font-size:13.95px;line-height:16px;letter-spacing:-0.418px;color:#6a6a6a;'>1 KB</span><span class=t style='left:141.75px;top:829.00px;font-size:14.86px;line-height:16px;letter-spacing:0.000px;color:#000;'>plugins.json</span><span class=t style='left:397.75px;top:829.00px;font-size:14.06px;line-height:16px;letter-spacing:0.000px;color:#6a6a6a;'>04.12.2019 20:51</span><span class=t style='left:577.50px;top:829.00px;font-size:14.53px;line-height:16px;letter-spacing:0.000px;color:#6a6a6a;'>JSON-Datei</span><span class=t style='left:766.25px;top:829.00px;font-size:13.95px;line-height:16px;letter-spacing:-0.155px;color:#6a6a6a;'>136 KB</span><span class=t style='left:141.75px;top:856.00px;font-size:14.43px;line-height:16px;letter-spacing:0.000px;color:#000;'>Postausgang.msf</span><span class=t style='left:397.75px;top:856.00px;font-size:14.06px;line-height:16px;letter-spacing:0.000px;color:#6a6a6a;'>20.01.2021 10:08</span><span class=t style='left:578.25px;top:856.00px;font-size:14.54px;line-height:16px;letter-spacing:0.000px;color:#6a6a6a;'>MSF-Datei</span><span class=t style='left:782.25px;top:856.00px;font-size:13.95px;line-height:16px;letter-spacing:-0.418px;color:#6a6a6a;'>2 KB</span><span class=t style='left:141.75px;top:883.00px;font-size:14.77px;line-height:16px;letter-spacing:0.000px;color:#000;'>prefs-1.js</span><span class=t style='left:397.75px;top:883.00px;font-size:14.06px;line-height:16px;letter-spacing:0.000px;color:#6a6a6a;'>16.01.2020 00:57</span><span class=t style='left:577.50px;top:883.00px;font-size:14.73px;line-height:16px;letter-spacing:0.000px;color:#6a6a6a;'>JavaSkriptdatei</span><span class=t style='left:774.25px;top:883.00px;font-size:13.95px;line-height:16px;letter-spacing:-0.253px;color:#6a6a6a;'>35 KB</span><span class=t style='left:141.75px;top:910.00px;font-size:14.77px;line-height:16px;letter-spacing:0.000px;color:#000;'>prefs-2.js</span><span class=t style='left:397.75px;top:910.00px;font-size:14.06px;line-height:16px;letter-spacing:0.000px;color:#6a6a6a;'>13.03.2020 21:45</span><span class=t style='left:577.50px;top:910.00px;font-size:14.73px;line-height:16px;letter-spacing:0.000px;color:#6a6a6a;'>JavaSkriptdatei</span><span class=t style='left:774.25px;top:910.00px;font-size:13.95px;line-height:16px;letter-spacing:-0.253px;color:#6a6a6a;'>39 KB</span><span class=t style='left:141.75px;top:937.00px;font-size:14.77px;line-height:16px;letter-spacing:0.000px;color:#000;'>prefs-3.js</span><span class=t style='left:397.75px;top:937.00px;font-size:14.06px;line-height:16px;letter-spacing:0.000px;color:#6a6a6a;'>09.05.2020 23:18</span><span class=t style='left:577.50px;top:937.00px;font-size:14.73px;line-height:16px;letter-spacing:0.000px;color:#6a6a6a;'>JavaSkriptdatei</span><span class=t style='left:774.25px;top:937.00px;font-size:13.95px;line-height:16px;letter-spacing:-0.253px;color:#6a6a6a;'>39 KB</span><span class=t style='left:141.75px;top:964.00px;font-size:14.77px;line-height:16px;letter-spacing:0.000px;color:#000;'>prefs-4.js</span><span class=t style='left:397.75px;top:964.00px;font-size:14.06px;line-height:16px;letter-spacing:0.000px;color:#6a6a6a;'>01.09.2020 16:43</span><span class=t style='left:577.50px;top:964.00px;font-size:14.73px;line-height:16px;letter-spacing:0.000px;color:#6a6a6a;'>JavaSkriptdatei</span><span class=t style='left:774.25px;top:964.00px;font-size:13.95px;line-height:16px;letter-spacing:-0.253px;color:#6a6a6a;'>46 KB</span><span class=t style='left:18.10px;top:993.00px;font-size:17.42px;line-height:20px;letter-spacing:0.000px;color:#1e395b;'>31 Elemente</span><span class=t style='left:142.60px;top:993.00px;font-size:17.51px;line-height:20px;letter-spacing:0.000px;color:#1e395b;'>1 Element ausgewählt</span><div class=a style='left:0;top:0;width:260.5px;height:60px;overflow:hidden'><span class=t style='left:54.73px;top:14.00px;font-size:17.03px;line-height:19px;letter-spacing:0.000px;color:#1b1b1b;font-weight:700;'>p* - Suchergebnisse in &quot;l0</span></div><span class=t style='left:346.52px;top:60.00px;font-size:19.76px;line-height:22px;letter-spacing:0.000px;color:#1b1b1b;'>Suchergebnisse in &quot;l0hc1tva.default&quot;</span><span class=t style='left:1441.03px;top:60.00px;font-size:20.09px;line-height:22px;letter-spacing:1.959px;color:#1b1b1b;'>p*</span><span class=t style='left:53.08px;top:127.00px;font-size:18.17px;line-height:20px;letter-spacing:0.000px;color:#b4b4b4;'>Neu</span><span class=t style='left:540.08px;top:127.00px;font-size:18.07px;line-height:20px;letter-spacing:0.000px;color:#1b1b1b;'>Sortieren</span><span class=t style='left:693.58px;top:127.00px;font-size:18.07px;line-height:20px;letter-spacing:0.000px;color:#1b1b1b;'>Anzeigen</span><span class=t style='left:858.58px;top:126.00px;font-size:18.37px;line-height:21px;letter-spacing:0.000px;color:#1b1b1b;'>Suchoptionen</span><span class=t style='left:1056.58px;top:127.00px;font-size:17.43px;line-height:20px;letter-spacing:0.000px;color:#1b1b1b;'>Suche schließen</span><span class=t style='left:1837.58px;top:127.00px;font-size:17.78px;line-height:20px;letter-spacing:0.000px;color:#1b1b1b;'>Details</span><span class=t style='left:63.73px;top:1032.00px;font-size:14.42px;line-height:16px;letter-spacing:-0.555px;color:#fff;'>21°C</span><span class=t style='left:64.22px;top:1051.00px;font-size:15.35px;line-height:17px;letter-spacing:0.000px;color:#e8e8ee;'>Teilw. sonnig</span><span class=t style='left:1859.22px;top:1031.00px;font-size:15.2px;line-height:17px;letter-spacing:0.000px;color:#fff;'>14:42</span><span class=t style='left:1822.72px;top:1052.00px;font-size:14.89px;line-height:16px;letter-spacing:0.000px;color:#fff;'>05.09.2025</span><span class=t style='left:512.20px;top:1041.00px;font-size:18.97px;line-height:21px;letter-spacing:0.000px;color:#5c5c5c;'>Suche</span><span class=t style='left:1272.70px;top:1031.00px;font-size:14.42px;line-height:16px;letter-spacing:0.769px;color:#fff;'>2</span>
</body></html>
